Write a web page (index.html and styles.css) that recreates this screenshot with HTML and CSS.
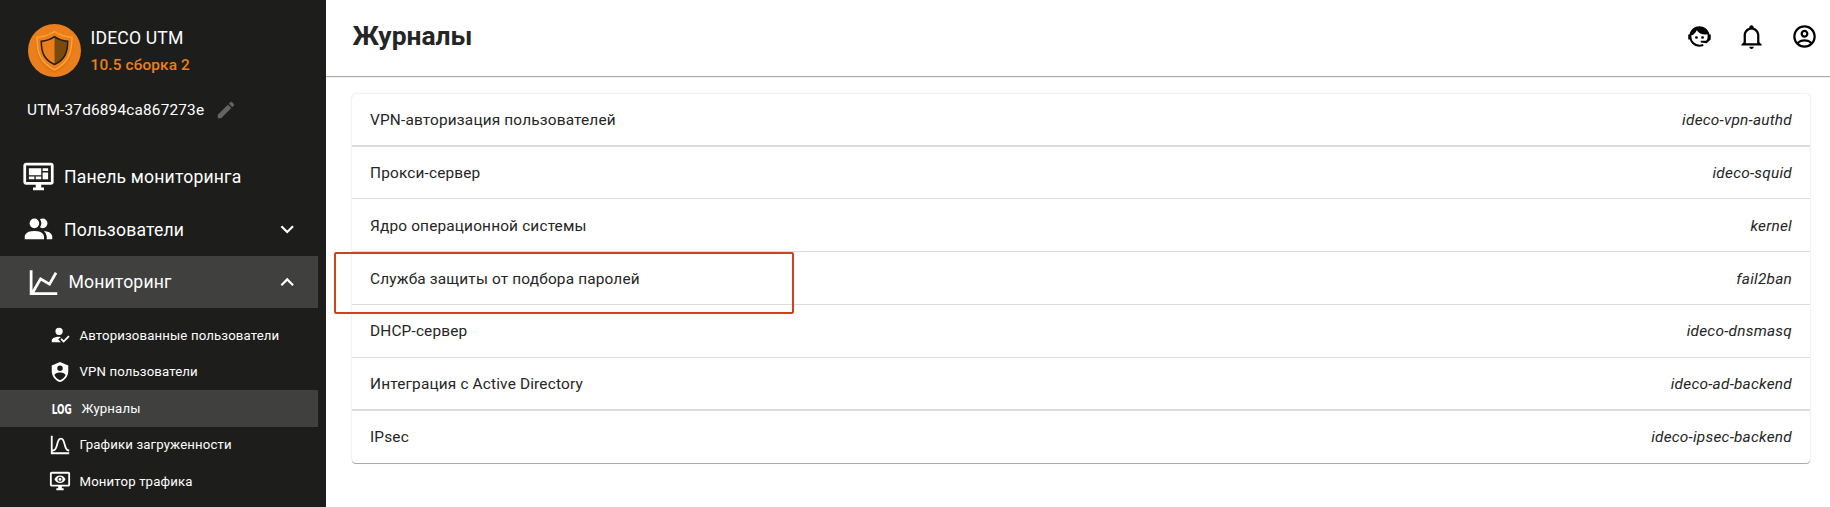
FILE: index.html
```html
<!DOCTYPE html>
<html lang="ru">
<head>
<meta charset="utf-8">
<title>Журналы</title>
<link rel="stylesheet" href="styles.css">
</head>
<body>
<div class="app">
  <aside class="sidebar">
    <div class="brand">
      <svg class="brand-logo" viewBox="0 0 53 53">
        <defs>
          <filter id="soft" x="-30%" y="-30%" width="160%" height="160%"><feGaussianBlur stdDeviation="1.6"/></filter>
        </defs>
        <circle cx="26.5" cy="26.5" r="26.5" fill="#ec7f1d"/>
        <path d="M26.5 9C31.500 12.500 37.500 14.300 44 14.600C44 29 41.500 40 26.500 48C11.500 40 9 29 9 14.600C15.500 14.300 21.500 12.500 26.500 9Z" fill="#a8560d" opacity=".6" filter="url(#soft)"/>
        <path d="M26.500 7.500C31.500 11 37.500 12.800 44 13.200C44 27.500 41.500 38.500 26.500 46C11.500 38.500 9 27.500 9 13.200C15.500 12.800 21.500 11 26.500 7.500Z" fill="#ec7f1d" stroke="#ffa42e" stroke-width="1.500"/>
        <path d="M26.500 12.700C30.500 15.500 34.500 17 39.700 17.300C39.700 27.500 37.500 35.500 26.500 40.500Z" fill="#7a4a0c"/>
        <path d="M26.500 12.700C30.500 15.500 34.500 17 39.700 17.300C39.700 27.500 37.500 35.500 26.500 40.500C15.500 35.500 13.300 27.500 13.300 17.300C18.500 17 22.500 15.500 26.500 12.700Z" fill="none" stroke="#1d1d1b" stroke-width="1.500"/>
      </svg>
      <div class="brand-text">
        <div class="brand-name">IDECO UTM</div>
        <div class="brand-version">10.5 сборка 2</div>
      </div>
    </div>
    <div class="host">
      <span>UTM-37d6894ca867273e</span>
      <svg class="icon-sm host-edit" viewBox="0 0 24 24"><path d="M20.710 7.040C21.100 6.650 21.100 6 20.710 5.630L18.370 3.290C18 2.900 17.350 2.900 16.960 3.290L15.120 5.120L18.870 8.870M3 17.250V21H6.750L17.810 9.930L14.060 6.180L3 17.250Z"/></svg>
    </div>
    <nav class="nav">
      <div class="nav-item">
        <svg class="icon-lg" viewBox="0 0 24 24"><path d="M21,16V4H3V16H21M21,2A2,2 0 0,1 23,4V16A2,2 0 0,1 21,18H14V20H16V22H8V20H10V18H3C1.89,18 1,17.1 1,16V4C1,2.89 1.89,2 3,2H21M5,6H14V11H5V6M15,6H19V8H15V6M19,9V14H15V9H19M5,12H9V14H5V12M10,12H14V14H10V12Z"/></svg>
        <span>Панель мониторинга</span>
      </div>
      <div class="nav-item">
        <svg class="icon-lg" viewBox="0 0 24 24"><path d="M16 17V19H2V17S2 13 9 13 16 17 16 17M12.5 7.5A3.5 3.5 0 1 0 9 11A3.5 3.5 0 0 0 12.5 7.5M15.94 13A5.32 5.32 0 0 1 18 17V19H22V17S22 13.370 15.940 13M15 4A3.390 3.390 0 0 0 13.070 4.590A5 5 0 0 1 13.070 10.410A3.390 3.390 0 0 0 15 11A3.500 3.500 0 0 0 15 4Z"/></svg>
        <span>Пользователи</span>
        <svg class="chevron" viewBox="0 0 24 24"><path d="M7.41,8.58L12,13.17L16.59,8.58L18,10L12,16L6,10L7.41,8.58Z"/></svg>
      </div>
      <div class="nav-item nav-item-open">
        <svg class="icon-lg" viewBox="0 0 24 24"><path d="M16,11.78L20.24,4.45L21.97,5.45L16.74,14.5L10.23,10.75L5.46,19H22V21H2V3H4V17.54L9.5,8L16,11.78Z"/></svg>
        <span>Мониторинг</span>
        <svg class="chevron" viewBox="0 0 24 24"><path d="M7.41,15.41L12,10.83L16.59,15.41L18,14L12,8L6,14L7.41,15.41Z"/></svg>
      </div>
      <div class="subnav">
        <div class="subnav-item">
          <svg class="icon-sm" viewBox="0 0 24 24"><path d="M21.1,12.5L22.5,13.91L15.97,20.5L12.5,17L13.9,15.59L15.97,17.67L21.1,12.5M10,17L13,20H3V18C3,15.79 6.58,14 11,14L12.89,14.11L10,17M11,4A4,4 0 0,1 15,8A4,4 0 0,1 11,12A4,4 0 0,1 7,8A4,4 0 0,1 11,4Z"/></svg>
          <span>Авторизованные пользователи</span>
        </div>
        <div class="subnav-item">
          <svg class="icon-sm" viewBox="0 0 24 24"><path d="M12,1L3,5V11C3,16.55 6.84,21.74 12,23C17.16,21.74 21,16.55 21,11V5L12,1M12,5A3,3 0 0,1 15,8A3,3 0 0,1 12,11A3,3 0 0,1 9,8A3,3 0 0,1 12,5M17.13,17C15.92,18.85 14.11,20.24 12,20.92C9.87,20.24 8.07,18.85 6.87,17C6.53,16.5 6.24,16 6,15.47C6,13.82 8.71,12.47 12,12.47C15.29,12.47 18,13.79 18,15.47C17.76,16 17.47,16.5 17.13,17Z"/></svg>
          <span>VPN пользователи</span>
        </div>
        <div class="subnav-item subnav-item-active">
          <svg class="icon-sm log-icon" viewBox="0 0 22 22"><text class="log-mark" x="0.800" y="15.800" textLength="20" lengthAdjust="spacingAndGlyphs">LOG</text></svg>
          <span>Журналы</span>
        </div>
        <div class="subnav-item">
          <svg class="icon-sm" viewBox="0 0 24 24"><path d="M9.96,11.31C10.82,8.1 11.5,6 13,6C14.5,6 15.18,8.1 16.04,11.31C17,14.92 18.1,19 22,19V17C19.8,17 19,14.54 17.97,10.8C17.08,7.46 16.15,4 13,4C9.85,4 8.92,7.46 8.03,10.8C7.03,14.54 6.2,17 4,17V2H2V22H22V20H4V19C7.9,19 9,14.92 9.96,11.31Z"/></svg>
          <span>Графики загруженности</span>
        </div>
        <div class="subnav-item">
          <svg class="icon-sm" viewBox="0 0 24 24"><path fill-rule="evenodd" d="M3 4V16H21V4H3M3 2H21C22.100 2 23 2.890 23 4V16C23 17.100 22.100 18 21 18H14V20H16V22H8V20H10V18H3C1.900 18 1 17.100 1 16V4C1 2.890 1.890 2 3 2ZM6 10.090C6.940 7.700 9.270 6 12 6C14.730 6 17.060 7.700 18 10.090C17.060 12.500 14.730 14.180 12 14.180C9.270 14.180 6.940 12.500 6 10.090ZM12 7.360A2.730 2.730 0 1 0 12 12.820A2.730 2.730 0 1 0 12 7.360ZM12 8.450A1.640 1.640 0 1 1 12 11.730A1.640 1.640 0 1 1 12 8.450Z"/></svg>
          <span>Монитор трафика</span>
        </div>
      </div>
    </nav>
  </aside>
  <main class="main">
    <header class="topbar">
      <h1 class="title">Журналы</h1>
      <div class="actions">
        <svg class="action" viewBox="0 0 24 24"><path d="M18.72,14.76C19.07,13.91 19.26,13 19.26,12C19.26,11.28 19.15,10.59 18.96,9.95C18.31,10.1 17.63,10.18 16.92,10.18C13.86,10.18 11.15,8.67 9.5,6.34C8.61,8.5 6.91,10.26 4.77,11.22C4.73,11.47 4.73,11.74 4.73,12A7.27,7.27 0 0,0 12,19.27C13.05,19.27 14.06,19.04 14.97,18.63C15.54,19.72 15.8,20.26 15.78,20.26C14.14,20.81 12.87,21.08 12,21.08C9.58,21.08 7.27,20.13 5.57,18.42C4.53,17.38 3.76,16.11 3.33,14.73H2V10.18H3.09C3.93,6.04 7.6,2.92 12,2.92C14.4,2.92 16.71,3.87 18.42,5.58C19.69,6.84 20.54,8.45 20.89,10.18H22V14.73H21.94L18.38,18L13.08,17.4V15.73H17.91L18.72,14.76M9.27,11.77A1.14,1.14 0 1,1 9.27,14.04A1.14,1.14 0 1,1 9.27,11.77M14.72,11.77A1.14,1.14 0 1,1 14.72,14.04A1.14,1.14 0 1,1 14.72,11.77Z"/></svg>
        <svg class="action" viewBox="0 0 24 24"><path d="M10 21H14C14 22.100 13.100 23 12 23S10 22.100 10 21M21 19V20H3V19L5 17V11C5 7.900 7 5.200 10 4.300V4C10 2.900 10.900 2 12 2S14 2.900 14 4V4.300C17 5.200 19 7.900 19 11V17L21 19M17 11C17 8.200 14.800 6 12 6S7 8.200 7 11V18H17V11Z"/></svg>
        <svg class="action action-account" viewBox="0 0 24 24"><path d="M12,2A10,10 0 0,0 2,12A10,10 0 0,0 12,22A10,10 0 0,0 22,12A10,10 0 0,0 12,2M7.07,18.28C7.5,17.38 10.12,16.5 12,16.5C13.88,16.5 16.5,17.38 16.93,18.28C15.57,19.36 13.86,20 12,20C10.14,20 8.43,19.36 7.07,18.28M18.36,16.83C16.93,15.09 13.46,14.5 12,14.5C10.54,14.5 7.07,15.09 5.64,16.83C4.62,15.5 4,13.82 4,12C4,7.59 7.59,4 12,4C16.41,4 20,7.59 20,12C20,13.82 19.38,15.5 18.36,16.83M12,6C10.06,6 8.5,7.56 8.5,9.5C8.5,11.44 10.06,13 12,13C13.94,13 15.5,11.44 15.5,9.5C15.5,7.56 13.94,6 12,6M12,11A1.5,1.5 0 0,1 10.5,9.5A1.5,1.5 0 0,1 12,8A1.5,1.5 0 0,1 13.5,9.5A1.5,1.5 0 0,1 12,11Z"/></svg>
      </div>
    </header>
    <section class="logs">
      <div class="log-row log-row-thick"><span>VPN-авторизация пользователей</span><em>ideco-vpn-authd</em></div>
      <div class="log-row log-row-short"><span>Прокси-сервер</span><em>ideco-squid</em></div>
      <div class="log-row log-row-low"><span>Ядро операционной системы</span><em>kernel</em></div>
      <div class="log-row log-row-low log-row-marked"><span>Служба защиты от подбора паролей</span><em>fail2ban</em></div>
      <div class="log-row"><span>DHCP-сервер</span><em>ideco-dnsmasq</em></div>
      <div class="log-row log-row-thick"><span>Интеграция с Active Directory</span><em>ideco-ad-backend</em></div>
      <div class="log-row"><span>IPsec</span><em>ideco-ipsec-backend</em></div>
    </section>
  </main>
</div>
</body>
</html>
```
FILE: styles.css
```css
*, *::after { box-sizing: border-box; }

body {
  margin: 0;
  font-family: Roboto, "Noto Sans", sans-serif;
  font-size: 15.4px;
  letter-spacing: 0.165px;
  color: #252525;
  background: #fff;
}

svg { display: block; flex: none; fill: currentColor; }

.app { display: flex; height: 507px; overflow: hidden; }

.sidebar {
  width: 326px;
  flex: none;
  padding-top: 24px;
  background: #1d1d1b;
  color: #fff;
}

.brand { display: flex; align-items: center; gap: 9.500px; height: 53px; padding-left: 28px; }
.brand-logo { width: 53px; height: 53px; }
.brand-text { padding-top: 2px; }
.brand-name { font-size: 17.6px; line-height: 27px; letter-spacing: 0.17px; }
.brand-version { font-weight: 500; line-height: 27px; letter-spacing: 0.13px; color: #ec7f1d; }

.host {
  display: flex;
  align-items: center;
  gap: 11px;
  height: 22px;
  margin-top: 22px;
  padding-left: 27px;
}
.host-edit { color: #646463; }

.icon-sm { width: 22px; height: 22px; }
.icon-lg { width: 33px; height: 33px; }

.nav { margin-top: 29px; width: 318px; }
.nav-item {
  display: flex;
  align-items: center;
  gap: 9px;
  height: 53px;
  padding: 0 18px 0 22px;
  font-size: 17.6px;
  letter-spacing: 0.17px;
}
.nav-item-open { height: 52px; padding-left: 27px; gap: 8.500px; background: #40403f; }
.chevron { width: 26.4px; height: 26.4px; margin-left: auto; }

.subnav { padding-top: 9px; font-size: 13.2px; letter-spacing: 0.14px; }
.subnav-item {
  display: flex;
  align-items: center;
  gap: 8.500px;
  height: 36.5px;
  padding-left: 49px;
}
.subnav-item-active {
  height: 37px;
  margin-bottom: -0.6px;
  padding-left: 51px;
  background: #40403f;
}
.log-icon { overflow: visible; }
.log-mark { font: 700 13.500px "DejaVu Sans", sans-serif; letter-spacing: 0; }

.main { flex: 1; min-width: 0; }

.topbar {
  display: flex;
  align-items: center;
  justify-content: space-between;
  height: 77px;
  padding: 0 12px 4px 26.400px;
  border-bottom: 1px solid #aaacaa;
  box-shadow: 0 1px 0 rgba(0, 0, 0, 0.06);
}
.title { margin: 0; font-size: 26.4px; font-weight: 700; letter-spacing: 0; }
.actions { display: flex; gap: 25px; color: #000; }
.action { width: 27px; height: 27px; }
.action-account { margin-left: 1.5px; }

.logs {
  margin: 17px 20px 0 26px;
  border-radius: 4px;
  box-shadow: 0 1px 0 #a9acaa, 0 0 2px rgba(0, 0, 0, 0.2);
}
.log-row {
  position: relative;
  display: flex;
  align-items: center;
  justify-content: space-between;
  height: 53px;
  padding: 0 18px;
  border-bottom: 1px solid #dcdcdc;
}
.log-row em { letter-spacing: 0.24px; }
.log-row-thick { border-bottom-width: 2px; }
.log-row-short { height: 52px; padding-top: 1px; }
.log-row-low { padding-top: 2px; }
.log-row:last-child { height: 52px; border-bottom: 0; }

/* highlight frame around the selected service */
.log-row-marked::after {
  content: "";
  position: absolute;
  left: -18.400px;
  top: 0;
  width: 460px;
  height: 62px;
  border: 2px solid #d0421b;
  border-radius: 2px;
}
```
